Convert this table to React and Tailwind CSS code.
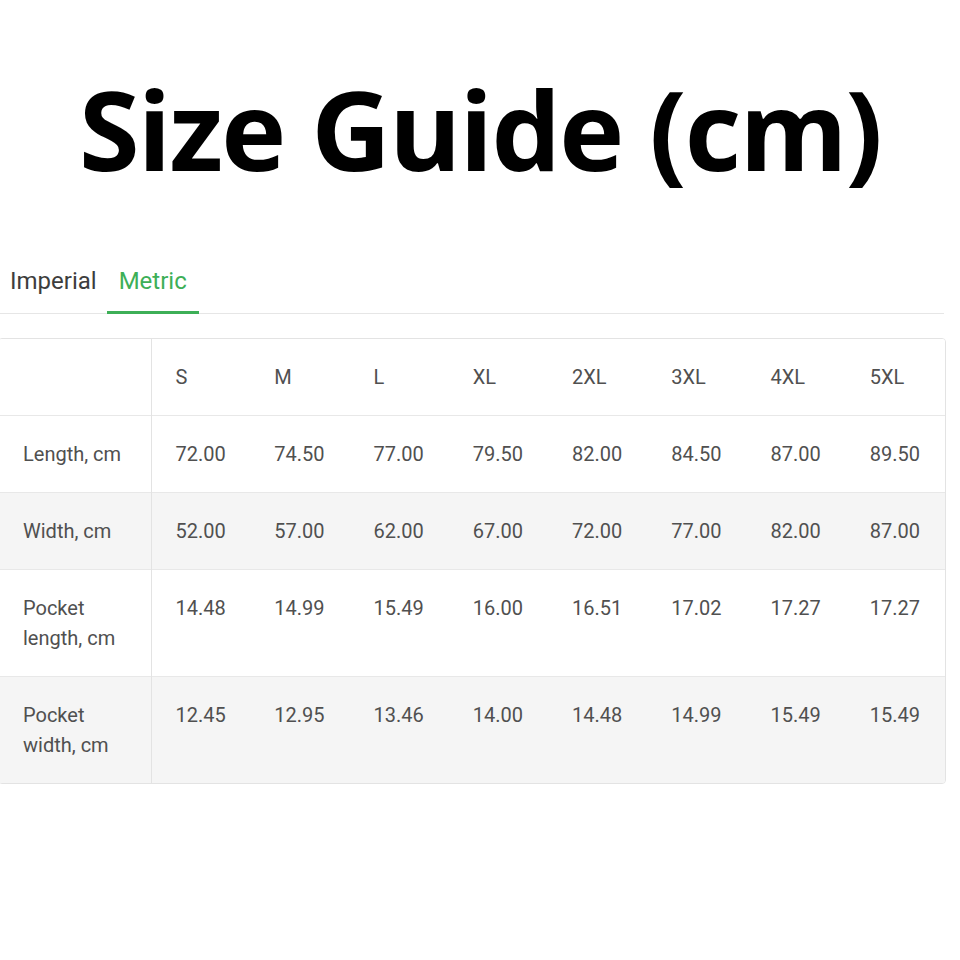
import React from "react";

const sizes = ["S", "M", "L", "XL", "2XL", "3XL", "4XL", "5XL"];

const rows = [
  { label: ["Length, cm"], values: ["72.00", "74.50", "77.00", "79.50", "82.00", "84.50", "87.00", "89.50"] },
  { label: ["Width, cm"], values: ["52.00", "57.00", "62.00", "67.00", "72.00", "77.00", "82.00", "87.00"] },
  { label: ["Pocket", "length, cm"], values: ["14.48", "14.99", "15.49", "16.00", "16.51", "17.02", "17.27", "17.27"] },
  { label: ["Pocket", "width, cm"], values: ["12.45", "12.95", "13.46", "14.00", "14.48", "14.99", "15.49", "15.49"] },
];

export default function App() {
  return (
    <div className="w-[960px] h-[960px] bg-white overflow-hidden font-['Roboto',sans-serif]">
      {/* titulo */}
      <h1 className="pt-[58px] text-center text-[110px] leading-[140px] font-bold text-black font-['Open_Sans',sans-serif] tracking-[-1.8px]">
        Size Guide (cm)
      </h1>

      {/* abas */}
      <div className="mt-[69px] w-[946px] -ml-[2px] flex border-b border-[#e6e6e6]">
        <button className="pl-[12px] pr-[10px] pb-[18px] text-[24px] leading-[28px] text-[#3d3d3d]">Imperial</button>
        <button className="px-[12px] pb-[16px] text-[24px] leading-[28px] text-[#3daf57] border-b-[3px] border-[#3daf57] -mb-[1px]">
          Metric
        </button>
      </div>

      {/* tabela */}
      <div className="mt-[24px] w-[948px] -ml-[2px] border border-[#e3e3e3] rounded-[4px] overflow-hidden">
        <table className="w-full border-collapse table-fixed text-[20px] text-[#505050]">
          <colgroup>
            <col className="w-[152px]" />
            {sizes.map((s) => (
              <col key={s} />
            ))}
          </colgroup>
          <thead>
            <tr className="bg-white">
              <th className="border-r border-[#e3e3e3]"></th>
              {sizes.map((s) => (
                <th key={s} className="px-[24px] py-[23px] leading-[30px] text-left font-normal">
                  {s}
                </th>
              ))}
            </tr>
          </thead>
          <tbody>
            {rows.map((row, i) => (
              <tr key={i} className={`border-t border-[#e8e8e8] ${i % 2 === 1 ? "bg-[#f5f5f5]" : "bg-white"}`}>
                <td className="pl-[24px] pr-[8px] py-[23px] leading-[30px] align-top border-r border-[#e3e3e3]">
                  {row.label.map((l, j) => (
                    <div key={j} className="whitespace-nowrap">{l}</div>
                  ))}
                </td>
                {row.values.map((v, j) => (
                  <td key={j} className="px-[24px] py-[23px] leading-[30px] align-top">
                    {v}
                  </td>
                ))}
              </tr>
            ))}
          </tbody>
        </table>
      </div>
    </div>
  );
}
